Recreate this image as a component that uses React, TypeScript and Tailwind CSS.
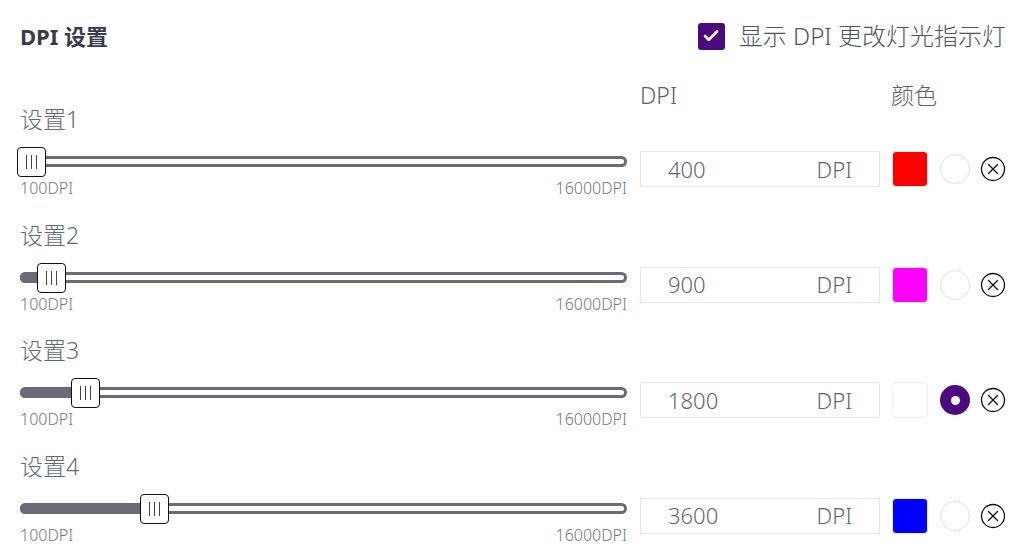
import { Check } from "lucide-react";

type DpiRow = {
  label: string;
  value: number;
  color: string;
  selected: boolean;
};

const rows: DpiRow[] = [
  { label: "设置1", value: 400, color: "#ff0000", selected: false },
  { label: "设置2", value: 900, color: "#ff00ff", selected: false },
  { label: "设置3", value: 1800, color: "#ffffff", selected: true },
  { label: "设置4", value: 3600, color: "#0000ff", selected: false },
];

const MIN = 100;
const MAX = 16000;
const TRACK = 607;

function Slider({ value }: { value: number }) {
  const center = ((value - MIN) / (MAX - MIN)) * TRACK;
  return (
    <div className="relative h-[30px] w-[607px]">
      <div className="absolute left-0 right-0 top-[9px] h-[11px] rounded-full border-[3px] border-[#6b6a78] bg-white" />
      <div
        className="absolute left-0 top-[9px] h-[11px] rounded-l-full bg-[#6b6a78]"
        style={{ width: center }}
      />
      <div
        className="absolute top-0 flex h-[30px] w-[29px] items-center justify-center gap-[4px] rounded-[4px] border border-[#111] bg-white"
        style={{ left: center - 14 }}
      >
        <span className="h-[14px] w-px bg-[#444]" />
        <span className="h-[14px] w-px bg-[#444]" />
        <span className="h-[14px] w-px bg-[#444]" />
      </div>
    </div>
  );
}

function CloseIcon() {
  return (
    <svg width="26" height="26" viewBox="0 0 26 26" fill="none" stroke="#111" strokeWidth="1.3">
      <circle cx="13" cy="13" r="11.5" />
      <path d="M8.5 8.5 L17.5 17.5 M17.5 8.5 L8.5 17.5" strokeLinecap="round" />
    </svg>
  );
}

export default function App() {
  return (
    <div
      className="h-[558px] w-[1024px] overflow-hidden bg-white pl-[20px] pr-[18px]"
      style={{ fontFamily: '"Noto Sans", "Noto Sans CJK SC", sans-serif' }}
    >
      <div className="flex h-[72px] items-center justify-between">
        <h1 className="text-[22px] font-bold text-[#3b3a4a]">DPI 设置</h1>
        <label className="flex items-center gap-[14px]">
          <span className="flex h-[27px] w-[27px] items-center justify-center rounded-[3px] bg-[#4b0a7d]">
            <Check className="h-[18px] w-[18px] text-white" strokeWidth={3.5} />
          </span>
          <span className="text-[24px] font-light text-[#4f5461]">显示 DPI 更改灯光指示灯</span>
        </label>
      </div>

      <div className="grid h-[34px] grid-cols-[607px_1fr] gap-[13px]">
        <div />
        <div className="flex text-[23px] font-light leading-[26px] text-[#5a606c]">
          <span className="mt-[10px] w-[251px]">DPI</span>
          <span className="mt-[10px]">颜色</span>
        </div>
      </div>

      {rows.map((row) => (
        <div key={row.label} className="grid h-[115.5px] grid-cols-[607px_1fr] gap-[13px]">
          <div className="flex flex-col">
            <div className="-mt-[2px] h-[30px] text-[23px] font-light leading-[30px] text-[#646b78]">
              {row.label}
            </div>
            <div className="mt-[13px]">
              <Slider value={row.value} />
            </div>
            <div className="mt-px flex h-[20px] justify-between text-[16px] font-light leading-[20px] text-[#737782]">
              <span>100DPI</span>
              <span>16000DPI</span>
            </div>
          </div>
          <div className="flex items-center self-start pt-[45px]">
            <div className="flex h-[36px] w-[240px] items-center justify-between border border-[#e5e7eb] px-[27px] text-[22px] font-light text-[#5f6672]">
              <span>{row.value}</span>
              <span>DPI</span>
            </div>
            <div
              className="ml-[12px] h-[36px] w-[36px] rounded-[4px] border border-[#eeeeee]"
              style={{ backgroundColor: row.color }}
            />
            {row.selected ? (
              <div className="ml-[12px] flex h-[30px] w-[30px] items-center justify-center rounded-full bg-[#4b0a7d]">
                <span className="h-[9px] w-[9px] rounded-full bg-white" />
              </div>
            ) : (
              <div className="ml-[12px] h-[30px] w-[30px] rounded-full border border-[#e0e0e0] bg-white" />
            )}
            <div className="ml-[10px] flex items-center">
              <CloseIcon />
            </div>
          </div>
        </div>
      ))}
    </div>
  );
}
